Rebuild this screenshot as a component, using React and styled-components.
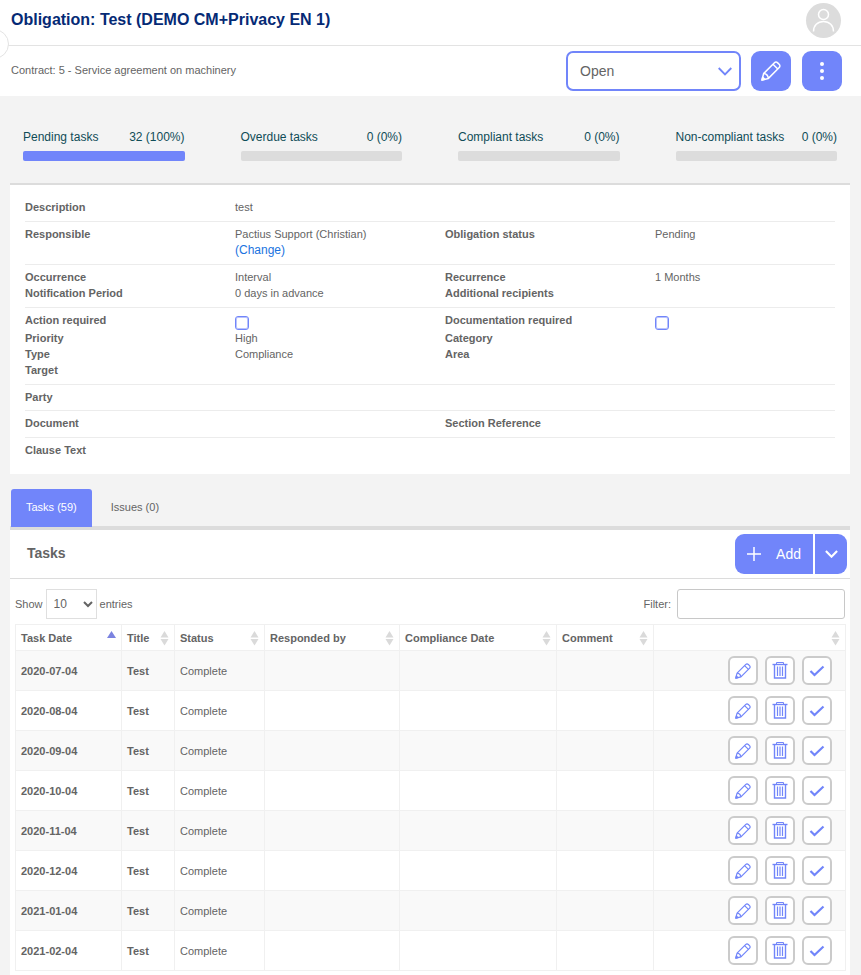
import React, { useState } from "react";
import styled, { createGlobalStyle, css } from "styled-components";

const PRIMARY = "#7185fa";

const GlobalStyle = createGlobalStyle`
  *, *::before, *::after { box-sizing: border-box; }
  body {
    margin: 0;
    background: #f3f3f3;
    color: #646464;
    font: 11px/16px "Liberation Sans", Arial, sans-serif;
  }
  button, input, select { font-family: inherit; color: inherit; }
`;

const Page = styled.div`
  position: relative;
  overflow: hidden;
`;

const TopBar = styled.header`
  display: flex;
  align-items: center;
  justify-content: space-between;
  height: 46px;
  padding: 0 20px 5px 11px;
  background: #fff;
  border-bottom: 1px solid #e3e3e3;
`;

const PageTitle = styled.h1`
  margin: 0;
  font-size: 16px;
  line-height: 20px;
  color: #052a75;
`;

const MenuHandle = styled.button`
  position: absolute;
  top: 29px;
  left: -21px;
  width: 30px;
  height: 30px;
  padding: 0;
  background: #fff;
  border: 1px solid #e3e3e3;
  border-radius: 50%;
`;

const Avatar = styled.button`
  width: 35px;
  height: 35px;
  padding: 0;
  border: 0;
  border-radius: 50%;
  background: #dcdcdc;
  svg { display: block; }
`;

const ContractBar = styled.div`
  display: flex;
  align-items: center;
  justify-content: space-between;
  height: 50px;
  padding: 0 19px 0 11px;
  background: #fff;
`;

const ContractName = styled.span`
  padding-bottom: 2px;
`;

const ContractActions = styled.div`
  display: flex;
  align-items: center;
  gap: 10px;
`;

const StatusBox = styled.div`
  display: grid;
  align-items: center;
  width: 175px;
  select, svg { grid-area: 1 / 1; }
  svg {
    justify-self: end;
    margin-right: 9px;
    pointer-events: none;
  }
`;

const StatusSelect = styled.select`
  appearance: none;
  width: 100%;
  height: 40px;
  padding: 0 32px 0 12px;
  font-size: 14px;
  background: #fff;
  border: 2px solid ${PRIMARY};
  border-radius: 7px;
`;

const SquareButton = styled.button`
  display: grid;
  place-items: center;
  width: 40px;
  height: 40px;
  padding: 0;
  color: #fff;
  background: ${PRIMARY};
  border: 0;
  border-radius: 9px;
  & + & { margin-left: 1px; }
`;

const Stats = styled.section`
  display: grid;
  grid-template-columns: repeat(4, 1fr);
  gap: 56px;
  padding: 33px 24px 22px 23px;
`;

const StatLabel = styled.div`
  display: flex;
  justify-content: space-between;
  margin-bottom: 6px;
  font-size: 12px;
  color: #0f4c57;
  white-space: nowrap;
`;

const Track = styled.div`
  height: 10px;
  background: #dcdcdc;
  border-radius: 2px;
  overflow: hidden;
`;

const Fill = styled.div`
  height: 100%;
  background: ${PRIMARY};
`;

const Details = styled.section`
  margin: 0 11px 15px 10px;
  padding: 10px 15px;
  background: #fff;
  border-top: 2px solid #dcdcdc;
`;

const DetailGroup = styled.div`
  padding: 4px 0 ${(p) => (p.$compact ? 5 : 6)}px;
  & + & { border-top: 1px solid #ececec; }
`;

const DetailRow = styled.div`
  display: grid;
  grid-template-columns: repeat(4, 1fr);
  column-gap: 30px;
  min-height: 16px;
`;

const Name = styled.label`
  font-weight: bold;
`;

const Value = styled.div`
  min-width: 0;
`;

const ChangeLink = styled.a`
  display: block;
  font-size: 12px;
  color: #1a73e0;
  text-decoration: none;
`;

const Check = styled.input`
  display: block;
  appearance: none;
  width: 14px;
  height: 14px;
  margin: 4px 0 0;
  background: #fff;
  border: 1px solid ${PRIMARY};
  border-radius: 3px;
  box-shadow: inset 0 0 0 1px #b9c3fc;
`;

const TabList = styled.div`
  display: flex;
  align-items: flex-end;
  margin: 0 11px 0 10px;
  padding-left: 1px;
  background: linear-gradient(#dcdcdc, #dcdcdc) bottom / 100% 4px no-repeat;
`;

const Tab = styled.button`
  height: 38px;
  margin-bottom: 3px;
  padding: 0 15px 3px;
  font-size: 11px;
  background: transparent;
  border: 0;
  border-radius: 3px 3px 0 0;
  & + & { margin-left: 4px; }
  ${(p) => p.$active && css`
    color: #fff;
    background: ${PRIMARY};
  `}
`;

const Panel = styled.section`
  margin: 0 11px 0 10px;
  background: #fff;
`;

const PanelHeader = styled.div`
  display: flex;
  align-items: center;
  justify-content: space-between;
  height: 49px;
  padding: 0 3px 0 17px;
  border-bottom: 1px solid #dcdcdc;
`;

const PanelTitle = styled.h2`
  margin: 0;
  padding-bottom: 2px;
  font-size: 14px;
`;

const SplitButton = styled.div`
  display: flex;
  gap: 2px;
`;

const AddButton = styled.button`
  display: flex;
  align-items: center;
  gap: 15px;
  height: 40px;
  padding: 0 12px;
  font-size: 14px;
  color: #fff;
  background: ${PRIMARY};
  border: 0;
  border-radius: 9px 0 0 9px;
`;

const AddMenuButton = styled.button`
  display: grid;
  place-items: center;
  width: 32px;
  height: 40px;
  padding: 0;
  color: #fff;
  background: ${PRIMARY};
  border: 0;
  border-radius: 0 9px 9px 0;
`;

const Controls = styled.div`
  display: flex;
  justify-content: space-between;
  padding: 10px 5px 5px;
`;

const ControlLabel = styled.label`
  display: flex;
  align-items: center;
  gap: ${(p) => p.$gap}px;
`;

const LengthSelect = styled.select`
  width: 51px;
  height: 30px;
  padding: 0 0 0 3px;
  font-size: 12px;
  background: #fff;
  border: 1px solid #dfdfdf;
  border-radius: 0;
`;

const FilterInput = styled.input`
  width: 168px;
  height: 30px;
  padding: 0 8px;
  font-size: 12px;
  border: 1px solid #c8c8c8;
  border-radius: 3px;
`;

const TableWrap = styled.div`
  padding: 0 4px 5px 5px;
`;

const TaskTable = styled.table`
  width: 100%;
  table-layout: fixed;
  border-collapse: collapse;
  th, td {
    padding: 0 5px;
    text-align: left;
    border: 1px solid #f0f0f0;
  }
  th { height: 26px; }
  td { height: 40px; }
  tbody tr:nth-child(odd) { background: #f9f9f9; }
`;

const Column = styled.col`
  width: ${(p) => (p.$width ? `${p.$width}px` : "auto")};
`;

const HeadCell = styled.div`
  display: flex;
  align-items: center;
  justify-content: space-between;
  white-space: nowrap;
`;

const StrongCell = styled.td`
  font-weight: bold;
`;

const RowActions = styled.div`
  display: flex;
  justify-content: flex-end;
  gap: 7px;
  padding-right: 8px;
`;

const IconButton = styled.button`
  display: grid;
  place-items: center;
  width: 30px;
  height: 29px;
  padding: 0;
  color: ${PRIMARY};
  background: #fff;
  border: 2px solid #cbcbcb;
  border-radius: 6px;
`;

function Pencil({ size }) {
  return (
    <svg width={size} height={size} viewBox="0 0 20 20" fill="none" stroke="currentColor" strokeWidth="1.5" strokeLinejoin="round" aria-hidden="true">
      <path d="M1 19l1.600-6.400L13.200 2c1.200-1.200 2.400-1.200 3.500-.1l1.400 1.400c1.100 1.100 1.100 2.300-.1 3.500L7.400 17.400z" />
      <path d="M2.600 12.600c2.400.2 4.400 2.200 4.800 4.800M12 3.200L16.800 8" />
      <path d="M1 19l.7-2.800 2.100 2.100z" fill="currentColor" />
    </svg>
  );
}

function Trash() {
  return (
    <svg width="16" height="17" viewBox="0 0 16 17" fill="none" stroke="currentColor" aria-hidden="true">
      <path d="M4.500 2V.500h7V2" />
      <path d="M.5 2.500h15" strokeWidth="1.400" />
      <path d="M2.500 3v13h11V3" strokeWidth="1.400" />
      <path d="M5.500 4.500v9.500M8 4.500v9.500M10.500 4.500v9.500" strokeWidth="1.200" />
    </svg>
  );
}

function Tick() {
  return (
    <svg width="16" height="12" viewBox="0 0 16 12" fill="none" stroke="currentColor" strokeWidth="2.200" aria-hidden="true">
      <path d="M1.500 6l4 4L14.500 1.500" />
    </svg>
  );
}

function Chevron({ width, height, stroke, weight }) {
  return (
    <svg width={width} height={height} viewBox="0 0 14 9" fill="none" stroke={stroke} strokeWidth={weight} aria-hidden="true">
      <path d="M.7 1L7 7.500 13.300 1" />
    </svg>
  );
}

function SortIcon({ active }) {
  return (
    <svg width="9" height="16" viewBox="0 0 9 16" aria-hidden="true">
      {active ? (
        <path d="M4.500 1L9 8H0z" fill="#7b83e0" />
      ) : (
        <path d="M4.500 1L8.500 7.500h-8zM4.500 15.500L.500 9h8z" fill="#dadada" />
      )}
    </svg>
  );
}

const stats = [
  { label: "Pending tasks", value: "32 (100%)", percent: 100 },
  { label: "Overdue tasks", value: "0 (0%)", percent: 0 },
  { label: "Compliant tasks", value: "0 (0%)", percent: 0 },
  { label: "Non-compliant tasks", value: "0 (0%)", percent: 0 },
];

const columns = [
  { label: "Task Date", width: 106, active: true },
  { label: "Title", width: 53 },
  { label: "Status", width: 90 },
  { label: "Responded by", width: 135 },
  { label: "Compliance Date", width: 157 },
  { label: "Comment", width: 97 },
  { label: "" },
];

const dates = [
  "2020-07-04", "2020-08-04", "2020-09-04", "2020-10-04",
  "2020-11-04", "2020-12-04", "2021-01-04", "2021-02-04",
];

function Field({ name, children }) {
  return (
    <>
      <Name as="div">{name}</Name>
      <Value>{children}</Value>
    </>
  );
}

function CheckField({ id, name }) {
  return (
    <>
      <Name htmlFor={id}>{name}</Name>
      <Value><Check id={id} type="checkbox" /></Value>
    </>
  );
}

export default function App() {
  const [tab, setTab] = useState("tasks");
  return (
    <Page>
      <GlobalStyle />
      <TopBar>
        <PageTitle>Obligation: Test (DEMO CM+Privacy EN 1)</PageTitle>
        <Avatar type="button" aria-label="Account">
          <svg width="35" height="35" viewBox="0 0 35 35" fill="none" stroke="#fff" strokeWidth="1.500" aria-hidden="true">
            <circle cx="17.500" cy="11.500" r="5" />
            <path d="M7.500 28.500c0-6 4-10 10-10s10 4 10 10" />
          </svg>
        </Avatar>
      </TopBar>
      <MenuHandle type="button" aria-label="Open menu" />
      <ContractBar>
        <ContractName>Contract: 5 - Service agreement on machinery</ContractName>
        <ContractActions>
          <StatusBox>
            <StatusSelect aria-label="Status" defaultValue="Open">
              <option>Open</option>
            </StatusSelect>
            <Chevron width={14} height={9} stroke={PRIMARY} weight={1.8} />
          </StatusBox>
          <SquareButton type="button" aria-label="Edit"><Pencil size={20} /></SquareButton>
          <SquareButton type="button" aria-label="More">
            <svg width="4" height="18" viewBox="0 0 4 18" fill="currentColor" aria-hidden="true">
              <circle cx="2" cy="2" r="2" />
              <circle cx="2" cy="9" r="2" />
              <circle cx="2" cy="16" r="2" />
            </svg>
          </SquareButton>
        </ContractActions>
      </ContractBar>

      <Stats>
        {stats.map((s) => (
          <div key={s.label}>
            <StatLabel><span>{s.label}</span><span>{s.value}</span></StatLabel>
            <Track><Fill style={{ width: `${s.percent}%` }} /></Track>
          </div>
        ))}
      </Stats>

      <Details>
        <DetailGroup>
          <DetailRow><Field name="Description">test</Field></DetailRow>
        </DetailGroup>
        <DetailGroup>
          <DetailRow>
            <Field name="Responsible">
              Pactius Support (Christian)
              <ChangeLink href="#change">(Change)</ChangeLink>
            </Field>
            <Field name="Obligation status">Pending</Field>
          </DetailRow>
        </DetailGroup>
        <DetailGroup>
          <DetailRow>
            <Field name="Occurrence">Interval</Field>
            <Field name="Recurrence">1 Months</Field>
          </DetailRow>
          <DetailRow>
            <Field name="Notification Period">0 days in advance</Field>
            <Field name="Additional recipients" />
          </DetailRow>
        </DetailGroup>
        <DetailGroup>
          <DetailRow>
            <CheckField id="action" name="Action required" />
            <CheckField id="documentation" name="Documentation required" />
          </DetailRow>
          <DetailRow>
            <Field name="Priority">High</Field>
            <Field name="Category" />
          </DetailRow>
          <DetailRow>
            <Field name="Type">Compliance</Field>
            <Field name="Area" />
          </DetailRow>
          <DetailRow><Field name="Target" /></DetailRow>
        </DetailGroup>
        <DetailGroup $compact>
          <DetailRow><Field name="Party" /></DetailRow>
        </DetailGroup>
        <DetailGroup>
          <DetailRow>
            <Field name="Document" />
            <Field name="Section Reference" />
          </DetailRow>
        </DetailGroup>
        <DetailGroup>
          <DetailRow><Field name="Clause Text" /></DetailRow>
        </DetailGroup>
      </Details>

      <TabList role="tablist">
        <Tab type="button" role="tab" aria-selected={tab === "tasks"} $active={tab === "tasks"} onClick={() => setTab("tasks")}>Tasks (59)</Tab>
        <Tab type="button" role="tab" aria-selected={tab === "issues"} $active={tab === "issues"} onClick={() => setTab("issues")}>Issues (0)</Tab>
      </TabList>

      <Panel>
        <PanelHeader>
          <PanelTitle>Tasks</PanelTitle>
          <SplitButton>
            <AddButton type="button">
              <svg width="14" height="14" viewBox="0 0 14 14" stroke="currentColor" strokeWidth="1.500" aria-hidden="true">
                <path d="M7 0v14M0 7h14" />
              </svg>
              Add
            </AddButton>
            <AddMenuButton type="button" aria-label="More add options">
              <Chevron width={13} height={8} stroke="#fff" weight={2.4} />
            </AddMenuButton>
          </SplitButton>
        </PanelHeader>
        <Controls>
          <ControlLabel $gap={3}>
            Show
            <LengthSelect defaultValue="10"><option>10</option></LengthSelect>
            entries
          </ControlLabel>
          <ControlLabel $gap={6}>
            Filter:
            <FilterInput type="search" />
          </ControlLabel>
        </Controls>
        <TableWrap>
          <TaskTable>
            <colgroup>
              {columns.map((c) => <Column key={c.label} $width={c.width} />)}
            </colgroup>
            <thead>
              <tr>
                {columns.map((c) => (
                  <th key={c.label} scope="col">
                    <HeadCell><span>{c.label}</span><SortIcon active={c.active} /></HeadCell>
                  </th>
                ))}
              </tr>
            </thead>
            <tbody>
              {dates.map((d) => (
                <tr key={d}>
                  <StrongCell>{d}</StrongCell>
                  <StrongCell>Test</StrongCell>
                  <td>Complete</td>
                  <td />
                  <td />
                  <td />
                  <td>
                    <RowActions>
                      <IconButton type="button" aria-label="Edit"><Pencil size={16} /></IconButton>
                      <IconButton type="button" aria-label="Delete"><Trash /></IconButton>
                      <IconButton type="button" aria-label="Complete"><Tick /></IconButton>
                    </RowActions>
                  </td>
                </tr>
              ))}
            </tbody>
          </TaskTable>
        </TableWrap>
      </Panel>
    </Page>
  );
}
